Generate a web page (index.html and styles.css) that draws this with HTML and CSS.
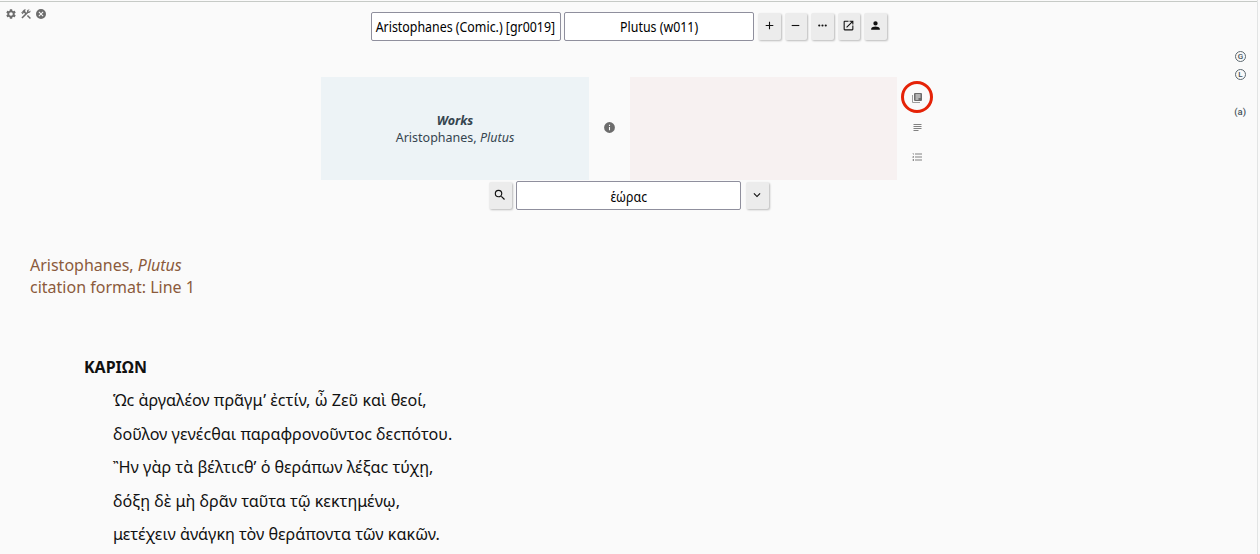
FILE: index.html
```html
<!DOCTYPE html>
<html lang="en">
<head>
<meta charset="utf-8">
<title>Plutus (w011)</title>
<link rel="stylesheet" href="styles.css">
</head>
<body>
<div class="app">
  <nav class="tools">
    <svg class="icon" viewBox="0 0 24 24"><path d="M19.14 12.94a7 7 0 0 0 0-1.88l2.03-1.58a.5.5 0 0 0 .12-.61l-1.92-3.32a.5.5 0 0 0-.59-.22l-2.39.96a7 7 0 0 0-1.62-.94l-.36-2.54a.5.5 0 0 0-.48-.41h-3.84a.5.5 0 0 0-.47.41l-.36 2.54a7 7 0 0 0-1.62.94l-2.39-.96a.5.5 0 0 0-.59.22L2.74 8.87a.5.5 0 0 0 .12.61l2.03 1.58a7 7 0 0 0 0 1.88l-2.03 1.58a.5.5 0 0 0-.12.61l1.92 3.32c.12.22.37.29.59.22l2.39-.96c.5.38 1.03.7 1.62.94l.36 2.54c.05.24.24.41.48.41h3.84c.24 0 .44-.17.47-.41l.36-2.54a7 7 0 0 0 1.62-.94l2.39.96c.22.08.47 0 .59-.22l1.92-3.32a.5.5 0 0 0-.12-.61zM12 15.6a3.6 3.6 0 1 1 0-7.2 3.6 3.6 0 0 1 0 7.2z"/></svg>
    <svg class="icon" viewBox="0 0 24 24"><path d="M13.8 15.9l2.1-2.1 6 6-2.1 2.1zM17.5 10c1.93 0 3.5-1.57 3.5-3.5 0-.58-.16-1.12-.41-1.6l-2.7 2.7-1.49-1.49 2.7-2.7C18.62 3.16 18.08 3 17.5 3 15.57 3 14 4.57 14 6.5c0 .41.08.8.21 1.16l-1.85 1.85-1.78-1.78.71-.71-1.41-1.41L12 3.49a3 3 0 0 0-4.24 0L4.22 7.03l1.41 1.41H2.81L2.1 9.15l3.54 3.54.71-.71V9.15l1.41 1.41.71-.71 1.78 1.78-7.41 7.41 2.12 2.12L16.34 9.79c.36.13.75.21 1.16.21z"/></svg>
    <svg class="icon" viewBox="0 0 24 24"><path d="M12 2a10 10 0 1 0 0 20 10 10 0 0 0 0-20zm5 13.59L15.59 17 12 13.41 8.41 17 7 15.59 10.59 12 7 8.41 8.41 7 12 10.59 15.59 7 17 8.41 13.41 12z"/></svg>
  </nav>
  <main class="page">
    <section class="controls">
      <div class="selectors">
        <div class="field author"><span class="narrow">Aristophanes (Comic.) [gr0019]</span></div>
        <div class="field work"><span class="narrow">Plutus (w011)</span></div>
        <button class="btn"><svg class="glyph" viewBox="0 0 24 24"><path d="M19 13h-6v6h-2v-6H5v-2h6V5h2v6h6z"/></svg></button>
        <button class="btn"><svg class="glyph" viewBox="0 0 24 24"><path d="M19 13H5v-2h14z"/></svg></button>
        <button class="btn"><svg class="glyph" viewBox="0 0 24 24"><path d="M6 10a2 2 0 1 0 0 4 2 2 0 0 0 0-4zm12 0a2 2 0 1 0 0 4 2 2 0 0 0 0-4zm-6 0a2 2 0 1 0 0 4 2 2 0 0 0 0-4z"/></svg></button>
        <button class="btn"><svg class="glyph" viewBox="0 0 24 24"><path d="M19 19H5V5h7V3H5a2 2 0 0 0-2 2v14a2 2 0 0 0 2 2h14a2 2 0 0 0 2-2v-7h-2zM14 3v2h3.59l-9.83 9.83 1.41 1.41L19 6.41V10h2V3z"/></svg></button>
        <button class="btn"><svg class="glyph" viewBox="0 0 24 24"><path d="M12 12a4 4 0 1 0 0-8 4 4 0 0 0 0 8zm0 2c-2.67 0-8 1.34-8 4v2h16v-2c0-2.66-5.33-4-8-4z"/></svg></button>
      </div>
      <div class="panels">
        <div class="panel included">
          <div class="label">Works</div>
          <div>Aristophanes, <i>Plutus</i></div>
        </div>
        <svg class="icon info" viewBox="0 0 24 24"><path d="M12 2a10 10 0 1 0 0 20 10 10 0 0 0 0-20zm1 15h-2v-6h2zm0-8h-2V7h2z"/></svg>
        <div class="panel excluded"></div>
        <div class="actions">
          <div class="ring"><svg class="icon" viewBox="0 0 24 24"><path opacity=".65" d="M4 6H2v14a2 2 0 0 0 2 2h14v-2H4z"/><path d="M20 2H8a2 2 0 0 0-2 2v12a2 2 0 0 0 2 2h12a2 2 0 0 0 2-2V4a2 2 0 0 0-2-2zm-1 9H9V9h10zm-4 4H9v-2h6zm4-8H9V5h10z"/></svg></div>
          <svg class="icon faded" viewBox="-1 1 24 24"><path d="M4 5h16v2H4zM4 9h16v2H4zM4 13h16v2H4zM4 17h10v2H4z"/></svg>
          <svg class="icon faded" viewBox="-1 0 24 24"><path d="M2 17h2v.5H3v1h1v.5H2v1h3v-4H2zm1-9h1V4H2v1h1zm-1 3h1.8L2 13.1v.9h3v-1H3.2L5 10.9V10H2zm5-6v2h14V5zm0 14h14v-2H7zm0-6h14v-2H7z"/></svg>
        </div>
      </div>
      <div class="search">
        <button class="btn"><svg class="glyph" viewBox="0 0 24 24"><path d="M15.5 14h-.79l-.28-.27A6.471 6.471 0 0 0 16 9.5 6.5 6.5 0 1 0 9.5 16c1.61 0 3.09-.59 4.23-1.57l.27.28v.79l5 4.99L20.49 19zm-6 0a4.5 4.5 0 1 1 0-9 4.5 4.5 0 0 1 0 9z"/></svg></button>
        <div class="field query"><span class="narrow">ἑώραϲ</span></div>
        <button class="btn"><svg class="glyph" viewBox="0 0 24 24"><path d="M16.59 8.59L12 13.17 7.41 8.59 6 10l6 6 6-6z"/></svg></button>
      </div>
    </section>
    <header class="citation">
      <div>Aristophanes, <i>Plutus</i></div>
      <div>citation format: Line 1</div>
    </header>
    <article class="text" lang="grc">
      <div class="speaker">ΚΑΡΙΩΝ</div>
      <div class="verse">Ὡϲ ἀργαλέον πρᾶγμ’ ἐϲτίν, ὦ Ζεῦ καὶ θεοί,</div>
      <div class="verse">δοῦλον γενέϲθαι παραφρονοῦντοϲ δεϲπότου.</div>
      <div class="verse">Ἢν γὰρ τὰ βέλτιϲθ’ ὁ θεράπων λέξαϲ τύχῃ,</div>
      <div class="verse">δόξῃ δὲ μὴ δρᾶν ταῦτα τῷ κεκτημένῳ,</div>
      <div class="verse">μετέχειν ἀνάγκη τὸν θεράποντα τῶν κακῶν.</div>
    </article>
  </main>
  <aside class="languages">
    <span class="badge">G</span>
    <span class="badge">L</span>
    <span class="mark">(a)</span>
  </aside>
</div>
</body>
</html>
```
FILE: styles.css
```css
* { box-sizing: border-box; }
body {
  margin: 0;
  background: #fafafa;
  color: #111;
  font-family: "Noto Sans", sans-serif;
}
.app {
  display: grid;
  grid-template-columns: 60px 1fr 60px;
  height: 554px;
  margin-right: 2px;
  padding-top: 1px;
  overflow: hidden;
  background: linear-gradient(#c6cac6, #c6cac6) 0 1px / 100% 1px no-repeat;
  border-right: 1px solid #e2e4e4;
}
.tools { display: flex; gap: 3px; padding: 7px 0 0 5px; }
.icon { display: block; flex: none; width: 12px; height: 12px; fill: #6c6c6c; }
.page { margin: 0 -60px; grid-column: 1 / -1; grid-row: 1; padding: 11px 60px 0; }
.tools, .languages { grid-row: 1; z-index: 1; }
.tools { grid-column: 1; align-self: start; }
.languages { grid-column: 3; align-self: start; }
.controls { display: flex; flex-direction: column; width: 620px; margin-left: 321px; }
.selectors { display: flex; height: 29px; margin-left: 50px; }
.field {
  display: flex;
  align-items: center;
  justify-content: center;
  height: 29px;
  border: 1px solid #8f8f9d;
  border-radius: 2px;
  background: #fff;
  font-size: 14px;
  white-space: nowrap;
  color: #000;
}
.narrow { transform: scaleX(.885); }
.author, .work { width: 190px; }
.author { padding-right: 2px; }
.work { margin: 0 4px 0 3px; }
.btn {
  display: flex;
  justify-content: center;
  flex: none;
  width: 22.5px;
  height: 27px;
  margin: 1px 4px 0 0;
  padding: 6px 0 0;
  border: 0;
  border-radius: 2px;
  background: #ececec;
  box-shadow: 1px 1px 2px #bbb;
}
.glyph { width: 13px; height: 13px; fill: #111; }
.search .glyph { width: 14px; height: 14px; }
.panels { display: flex; height: 103px; margin-top: 36px; }
.panel {
  display: flex;
  flex-direction: column;
  align-items: center;
  justify-content: center;
  height: 103px;
  font-size: 12.5px;
  line-height: 17px;
  color: #36454f;
}
.included { width: 268px; background: #edf3f6; }
.excluded { width: 267px; background: #f7f1f1; }
.label { font-weight: bold; font-style: italic; }
.info { width: 13px; height: 13px; margin: 44px 14px 0 14px; }
.actions { display: flex; flex-direction: column; align-items: center; width: 40px; padding-top: 4px; }
.ring {
  display: grid;
  place-items: center;
  width: 32px;
  height: 32px;
  padding: 1px 0 0;
  border: 3px solid #e52207;
  border-radius: 50%;
}
.faded { margin-top: 9px; opacity: .85; }
.faded + .faded { margin-top: 17px; }
.search { display: flex; margin: 1px 0 0 168px; }
.query { width: 225px; margin: 0 5px 0 .5px; padding-top: 1px; }
.search .btn:first-child { margin-right: 4px; }
.citation { margin: 44px 0 0 30px; font-size: 16px; line-height: 22px; color: #8b5a3c; }
.text { margin: 52.5px 0 0 84px; font-size: 16.15px; line-height: 33.5px; white-space: nowrap; }
.speaker { font-size: 16px; font-weight: bold; }
.verse { padding-left: 29px; }
.languages {
  display: flex;
  flex-direction: column;
  align-items: flex-end;
  padding: 50px 11px 0 0;
  color: #46535c;
}
.badge {
  width: 11px;
  height: 11px;
  margin-bottom: 7px;
  border: 1px solid #5b6870;
  border-radius: 50%;
  font: 500 8px/9px "Roboto", sans-serif;
  text-align: center;
}
.mark { margin-top: 18px; font: 500 9.5px/14px "Roboto", sans-serif; }
```
